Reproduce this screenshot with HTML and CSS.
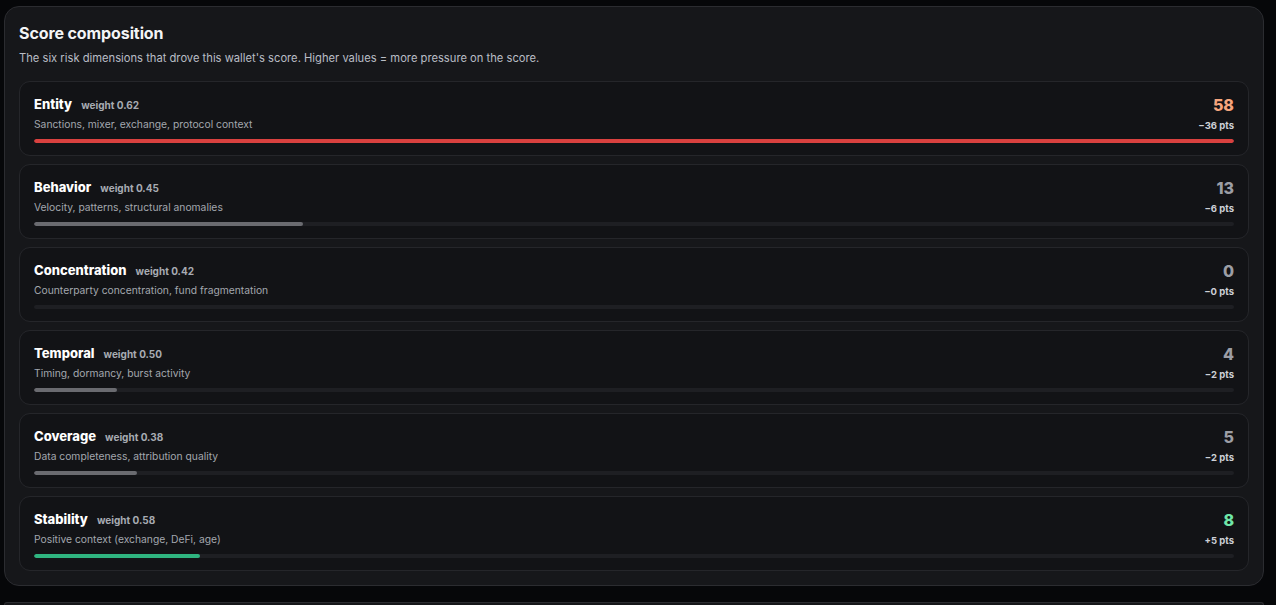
FILE: index.html
```html
<!DOCTYPE html>
<html lang="en">
<head>
<meta charset="utf-8">
<title>Score composition</title>
<link rel="stylesheet" href="styles.css">
</head>
<body>
<section class="card">
  <h2 class="title">Score composition</h2>
  <p class="subtitle">The six risk dimensions that drove this wallet's score. Higher values = more pressure on the score.</p>
  <div class="rows">
    <div class="row">
      <div class="row-top">
        <div class="info">
          <div class="name-line"><span class="name">Entity</span><span class="weight">weight 0.62</span></div>
          <div class="desc">Sanctions, mixer, exchange, protocol context</div>
        </div>
        <div class="nums">
          <div class="value value-warn">58</div>
          <div class="pts">−36 pts</div>
        </div>
      </div>
      <div class="track"><div class="fill fill-red" style="width:100%"></div></div>
    </div>
    <div class="row">
      <div class="row-top">
        <div class="info">
          <div class="name-line"><span class="name">Behavior</span><span class="weight">weight 0.45</span></div>
          <div class="desc">Velocity, patterns, structural anomalies</div>
        </div>
        <div class="nums">
          <div class="value">13</div>
          <div class="pts">−6 pts</div>
        </div>
      </div>
      <div class="track"><div class="fill fill-gray" style="width:22.4%"></div></div>
    </div>
    <div class="row">
      <div class="row-top">
        <div class="info">
          <div class="name-line"><span class="name">Concentration</span><span class="weight">weight 0.42</span></div>
          <div class="desc">Counterparty concentration, fund fragmentation</div>
        </div>
        <div class="nums">
          <div class="value">0</div>
          <div class="pts">−0 pts</div>
        </div>
      </div>
      <div class="track"><div class="fill fill-gray" style="width:0%"></div></div>
    </div>
    <div class="row">
      <div class="row-top">
        <div class="info">
          <div class="name-line"><span class="name">Temporal</span><span class="weight">weight 0.50</span></div>
          <div class="desc">Timing, dormancy, burst activity</div>
        </div>
        <div class="nums">
          <div class="value">4</div>
          <div class="pts">−2 pts</div>
        </div>
      </div>
      <div class="track"><div class="fill fill-gray" style="width:6.9%"></div></div>
    </div>
    <div class="row">
      <div class="row-top">
        <div class="info">
          <div class="name-line"><span class="name">Coverage</span><span class="weight">weight 0.38</span></div>
          <div class="desc">Data completeness, attribution quality</div>
        </div>
        <div class="nums">
          <div class="value">5</div>
          <div class="pts">−2 pts</div>
        </div>
      </div>
      <div class="track"><div class="fill fill-gray" style="width:8.6%"></div></div>
    </div>
    <div class="row">
      <div class="row-top">
        <div class="info">
          <div class="name-line"><span class="name">Stability</span><span class="weight">weight 0.58</span></div>
          <div class="desc">Positive context (exchange, DeFi, age)</div>
        </div>
        <div class="nums">
          <div class="value value-good">8</div>
          <div class="pts">+5 pts</div>
        </div>
      </div>
      <div class="track"><div class="fill fill-green" style="width:13.8%"></div></div>
    </div>
  </div>
</section>
<section class="card card-next"></section>
</body>
</html>
```
FILE: styles.css
```css
* { box-sizing: border-box; }
html, body { margin: 0; padding: 0; }
body {
  background: #060709;
  font-family: Inter, "Noto Sans", "Liberation Sans", sans-serif;
  color: #e8e9ec;
  padding: 6px 12px 0 4px;
  overflow: hidden;
  height: 605px;
}
.card {
  width: 1260px;
  background: #16171a;
  border: 1px solid #2b2c30;
  border-radius: 15px;
  padding: 16px 14px 14px 14px;
}
.card-next {
  margin-top: 16px;
  height: 3px;
  padding: 0;
  border-bottom: none;
  border-radius: 15px 15px 0 0;
}
.title {
  margin: 0;
  font-size: 16px;
  line-height: 20px;
  font-weight: 700;
  color: #f3f4f6;
  letter-spacing: -0.1px;
}
.subtitle {
  margin: 7px 0 0 0;
  font-size: 11.2px;
  line-height: 16px;
  color: #b9bdc5;
}
.rows {
  margin-top: 15px;
  display: flex;
  flex-direction: column;
  gap: 8px;
}
.row {
  background: #121316;
  border: 1px solid #25262a;
  border-radius: 11px;
  padding: 13px 14px 12px 14px;
}
.row-top {
  display: flex;
  justify-content: space-between;
  align-items: flex-start;
}
.name-line {
  display: flex;
  align-items: baseline;
  gap: 9px;
  line-height: 18px;
}
.name {
  font-size: 13px;
  font-weight: 800;
  color: #ffffff;
}
.weight {
  font-size: 10px;
  font-weight: 700;
  color: #a7abb2;
}
.desc {
  margin-top: 2px;
  font-size: 10.3px;
  line-height: 16px;
  color: #a3a7ae;
}
.nums {
  text-align: right;
}
.value {
  font-size: 16px;
  line-height: 20px;
  font-weight: 800;
  color: #9c9ea5;
}
.value-warn { color: #f6a57d; }
.value-good { color: #6fe6a8; }
.pts {
  margin-top: 4px;
  font-size: 9.5px;
  line-height: 14px;
  font-weight: 700;
  color: #cdd0d6;
}
.track {
  margin-top: 6px;
  height: 4px;
  border-radius: 2px;
  background: #1e1f23;
  overflow: hidden;
}
.fill {
  height: 100%;
  border-radius: 2px;
}
.fill-red { background: #d9413f; }
.fill-gray { background: #6a6b70; }
.fill-green { background: #2fb580; }
```
